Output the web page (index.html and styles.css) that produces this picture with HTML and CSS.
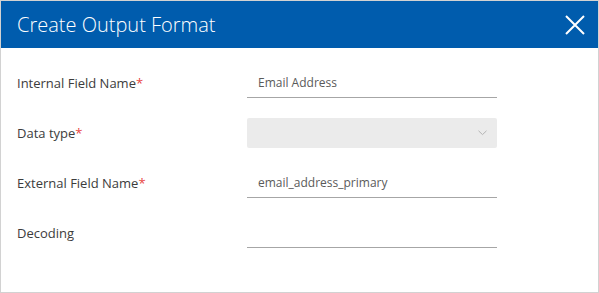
FILE: index.html
```html
<!DOCTYPE html>
<html>
<head>
<meta charset="utf-8">
<link rel="stylesheet" href="styles.css">
</head>
<body>
<div class="dialog">
  <div class="header">
    <span class="title">Create Output Format</span>
    <button class="close" aria-label="Close">
      <svg width="20" height="20" viewBox="0 0 20 20"><path d="M1 1 L19 19 M19 1 L1 19" stroke="#fff" stroke-width="2" fill="none"/></svg>
    </button>
  </div>
  <div class="form">
    <div class="row">
      <label class="label">Internal Field Name<span class="req">*</span></label>
      <div class="field text"><span class="value">Email Address</span></div>
    </div>
    <div class="row">
      <label class="label">Data type<span class="req">*</span></label>
      <div class="field select">
        <svg class="chev" width="9" height="6" viewBox="0 0 9 6"><path d="M0.5 0.8 L4.5 4.6 L8.5 0.8" stroke="#b3b3b3" stroke-width="1" fill="none"/></svg>
      </div>
    </div>
    <div class="row">
      <label class="label">External Field Name<span class="req">*</span></label>
      <div class="field text"><span class="value">email_address_primary</span></div>
    </div>
    <div class="row">
      <label class="label">Decoding</label>
      <div class="field text"><span class="value"></span></div>
    </div>
  </div>
</div>
</body>
</html>
```
FILE: styles.css
```css
html, body { margin: 0; padding: 0; background: #fff; }
body { font-family: "Open Sans", "Liberation Sans", sans-serif; }
.dialog {
  width: 599px;
  height: 293px;
  box-sizing: border-box;
  border: 1px solid #d2d2d2;
  background: #fff;
}
.header {
  height: 47px;
  background: #005cad;
  display: flex;
  align-items: center;
  justify-content: space-between;
  padding: 0 13px 0 16px;
}
.title {
  color: #fff;
  font-size: 20px;
  font-weight: 300;
  line-height: 1;
}
.close {
  background: none;
  border: 0;
  padding: 0;
  width: 20px;
  height: 20px;
  display: flex;
}
.form {
  padding: 20px 0 0 16px;
  display: flex;
  flex-direction: column;
  gap: 20px;
}
.row {
  display: flex;
  align-items: center;
  height: 30px;
}
.label {
  width: 230px;
  font-size: 13px;
  color: #3c3c3c;
}
.req { color: #e8463f; }
.field {
  width: 250px;
  height: 30px;
  box-sizing: border-box;
  display: flex;
  align-items: center;
}
.text {
  border-bottom: 1px solid #a6a6a6;
  padding-left: 11px;
}
.value {
  font-size: 12px;
  color: #5a5a5a;
}
.select {
  background: #ebebeb;
  border-radius: 2px;
  justify-content: flex-end;
  padding-right: 10px;
}
```
